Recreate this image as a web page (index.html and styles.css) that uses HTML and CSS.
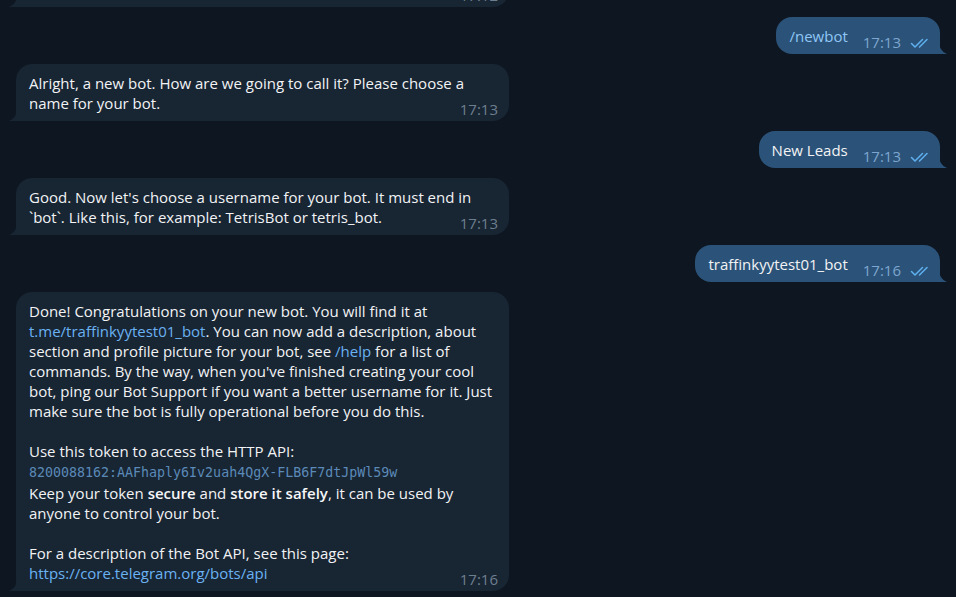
FILE: index.html
```html
<!DOCTYPE html>
<html lang="en">
<head>
<meta charset="utf-8">
<title>BotFather</title>
<link rel="stylesheet" href="styles.css">
</head>
<body>
<div class="chat">
  <div class="row row-in">
    <div class="bubble bubble-in">
      <div class="text">/newbot - create a new bot</div>
      <span class="time time-cut">17:12</span>
      <svg class="tail tail-in" width="8" height="13" viewBox="0 0 8 13"><path d="M8 0 Q8 10 0 13 L8 13 Z"/></svg>
    </div>
  </div>

  <div class="row row-out">
    <div class="bubble bubble-out">
      <span class="text cmd">/newbot</span>
      <span class="meta"><span class="time">17:13</span><svg class="ticks" width="22" height="12" viewBox="0 0 22 12"><path d="M1.5 6.5 L5 10 L12.5 2.5 M9.5 10 L17 2.5"/></svg></span>
      <svg class="tail tail-out" width="8" height="13" viewBox="0 0 8 13"><path d="M0 0 Q0 10 8 13 L0 13 Z"/></svg>
    </div>
  </div>

  <div class="row row-in">
    <div class="bubble bubble-in">
      <div class="text">Alright, a new bot. How are we going to call it? Please choose a name for your bot.</div>
      <span class="time">17:13</span>
      <svg class="tail tail-in" width="8" height="13" viewBox="0 0 8 13"><path d="M8 0 Q8 10 0 13 L8 13 Z"/></svg>
    </div>
  </div>

  <div class="row row-out">
    <div class="bubble bubble-out">
      <span class="text">New Leads</span>
      <span class="meta"><span class="time">17:13</span><svg class="ticks" width="22" height="12" viewBox="0 0 22 12"><path d="M1.5 6.5 L5 10 L12.5 2.5 M9.5 10 L17 2.5"/></svg></span>
      <svg class="tail tail-out" width="8" height="13" viewBox="0 0 8 13"><path d="M0 0 Q0 10 8 13 L0 13 Z"/></svg>
    </div>
  </div>

  <div class="row row-in">
    <div class="bubble bubble-in">
      <div class="text">Good. Now let's choose a username for your bot. It must end in `bot`. Like this, for example: TetrisBot or tetris_bot.</div>
      <span class="time">17:13</span>
      <svg class="tail tail-in" width="8" height="13" viewBox="0 0 8 13"><path d="M8 0 Q8 10 0 13 L8 13 Z"/></svg>
    </div>
  </div>

  <div class="row row-out">
    <div class="bubble bubble-out">
      <span class="text">traffinkyytest01_bot</span>
      <span class="meta"><span class="time">17:16</span><svg class="ticks" width="22" height="12" viewBox="0 0 22 12"><path d="M1.5 6.5 L5 10 L12.5 2.5 M9.5 10 L17 2.5"/></svg></span>
      <svg class="tail tail-out" width="8" height="13" viewBox="0 0 8 13"><path d="M0 0 Q0 10 8 13 L0 13 Z"/></svg>
    </div>
  </div>

  <div class="row row-in">
    <div class="bubble bubble-in">
      <div class="text">
        <p>Done! Congratulations on your new bot. You will find it at <a class="link">t.me/traffinkyytest01_bot</a>. You can now add a description, about section and profile picture for your bot, see <a class="link">/help</a> for a list of commands. By the way, when you've finished creating your cool bot, ping our Bot Support if you want a better username for it. Just make sure the bot is fully operational before you do this.</p>
        <p>Use this token to access the HTTP API:<br><code class="token">8200088162:AAFhaply6Iv2uah4QgX-FLB6F7dtJpWl59w</code><br>Keep your token <b>secure</b> and <b>store it safely</b>, it can be used by anyone to control your bot.</p>
        <p>For a description of the Bot API, see this page:<br><a class="link">https://core.telegram.org/bots/api</a></p>
      </div>
      <span class="time">17:16</span>
      <svg class="tail tail-in" width="8" height="13" viewBox="0 0 8 13"><path d="M8 0 Q8 10 0 13 L8 13 Z"/></svg>
    </div>
  </div>
</div>
</body>
</html>
```

FILE: styles.css
```css
html, body {
  margin: 0;
  padding: 0;
  height: 100%;
  overflow: hidden;
  background: #0e1621;
}

body {
  font-family: "Open Sans", "Noto Sans", sans-serif;
  font-size: 15px;
  line-height: 20px;
  color: #f2f3f5;
}

.chat {
  display: flex;
  flex-direction: column;
  gap: 10px;
  padding: 0 16px;
  margin-top: -30px;
}

.row {
  display: flex;
}

.row-in {
  justify-content: flex-start;
}

.row-out {
  justify-content: flex-end;
}

.bubble {
  position: relative;
  box-sizing: border-box;
}

.bubble-in {
  width: 493px;
  background: #182533;
  border-radius: 16px 16px 16px 0;
  padding: 9px 13px 8px 13px;
}

.bubble-out {
  display: flex;
  align-items: flex-end;
  background: #2b5278;
  border-radius: 16px 16px 0 16px;
  padding: 9px 8px 8px 13px;
}

.text p {
  margin: 0 0 20px 0;
}

.text p:last-child {
  margin-bottom: 0;
}

.cmd {
  color: #8fc6f6;
}

.link {
  color: #6ab2f2;
  text-decoration: none;
}

.token {
  font-family: "DejaVu Sans Mono", "Liberation Mono", monospace;
  font-size: 13.3px;
  line-height: 20px;
  color: #5b8ab8;
}

b {
  font-weight: 600;
  color: #f5f6f8;
}

.time {
  font-size: 15px;
  line-height: 20px;
  white-space: nowrap;
}

.bubble-in .time {
  position: absolute;
  right: 11px;
  bottom: 2px;
  color: #6d7f8f;
}

.time-cut {
  bottom: 3px;
}

.meta {
  display: flex;
  align-items: center;
  margin-left: 15px;
  margin-bottom: -6px;
  line-height: 20px;
  color: #7ca6cf;
}

.ticks {
  margin-left: 9px;
  margin-top: 1px;
  fill: none;
  stroke: #5fb0f0;
  stroke-width: 1.5;
  stroke-linecap: round;
  stroke-linejoin: round;
}

.tail {
  position: absolute;
  bottom: 0;
}

.tail-in {
  left: -7px;
  fill: #182533;
}

.tail-out {
  right: -7px;
  fill: #2b5278;
}
```
